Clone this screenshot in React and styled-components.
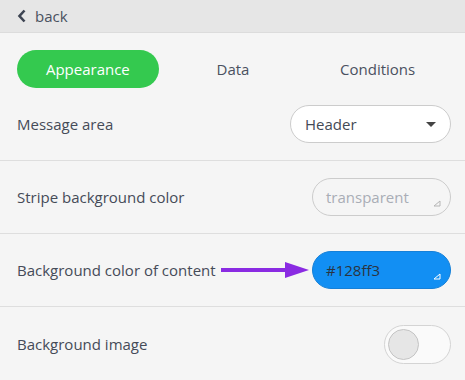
import { useState } from "react";
import styled, { createGlobalStyle } from "styled-components";

const GlobalStyle = createGlobalStyle`
  html, body {
    margin: 0;
    padding: 0;
    background: #f5f5f5;
  }
  body {
    font-family: "Open Sans", "Noto Sans", sans-serif;
    color: #444a55;
  }
`;

const Page = styled.div`
  width: 465px;
  height: 380px;
  background: #f5f5f5;
  overflow: hidden;
`;

const TopBar = styled.div`
  height: 32px;
  background: #e6e6e6;
  border-bottom: 1px solid #dcdcdc;
  display: flex;
  align-items: center;
  padding-left: 17px;
  gap: 9px;
  font-size: 15px;
  color: #4a5160;
`;

const Tabs = styled.div`
  display: flex;
  align-items: center;
  padding: 17px 17px 0 17px;
  height: 38px;
`;

const Tab = styled.button`
  height: 38px;
  border: none;
  border-radius: 19px;
  font-family: inherit;
  font-size: 15px;
  cursor: pointer;
  width: ${(p) => p.$w}px;
  background: ${(p) => (p.$active ? "#34c94f" : "transparent")};
  color: ${(p) => (p.$active ? "#fff" : "#4a5160")};
  padding: 0;
`;

const Row = styled.div`
  display: flex;
  align-items: center;
  justify-content: space-between;
  height: ${(p) => p.$h}px;
  padding: 0 14px 0 17px;
  border-bottom: ${(p) => (p.$last ? "none" : "1px solid #dedede")};
  position: relative;
`;

const Label = styled.span`
  font-size: 15px;
  color: #454b58;
`;

const Select = styled.div`
  width: 161px;
  height: 38px;
  box-sizing: border-box;
  border: 1px solid #cccccc;
  border-radius: 19px;
  background: #fff;
  display: flex;
  align-items: center;
  justify-content: space-between;
  padding: 0 14px 0 14px;
  font-size: 15px;
  color: #444a55;
`;

const Caret = styled.span`
  width: 0;
  height: 0;
  border-left: 5px solid transparent;
  border-right: 5px solid transparent;
  border-top: 5px solid #444;
`;

const ColorField = styled.div`
  width: 139px;
  height: 38px;
  box-sizing: border-box;
  border-radius: 19px;
  border: 1px solid ${(p) => (p.$filled ? "#1580d8" : "#cccccc")};
  background: ${(p) => (p.$filled ? "#128ff3" : "transparent")};
  color: ${(p) => (p.$filled ? "#2b3440" : "#a9adb6")};
  display: flex;
  align-items: center;
  padding-left: 13px;
  font-size: 15px;
  position: relative;
`;

const Grip = styled.svg`
  position: absolute;
  right: 9px;
  bottom: 8px;
`;

const Toggle = styled.div`
  width: 67px;
  height: 39px;
  box-sizing: border-box;
  border: 1px solid #d4d4d4;
  border-radius: 20px;
  background: #fafafa;
  display: flex;
  align-items: center;
  padding-left: 3px;
`;

const Knob = styled.div`
  width: 29px;
  height: 29px;
  border-radius: 50%;
  background: #e6e6e6;
  border: 1px solid #c4c4c4;
`;

const Arrow = styled.svg`
  position: absolute;
  left: 221px;
  top: 50%;
  transform: translateY(-50%);
`;

function ResizeGrip({ color }) {
  return (
    <Grip width="8" height="7" viewBox="0 0 8 7">
      <path d="M1 6 L7 6 L7 1 Z" fill="none" stroke={color} strokeWidth="1" strokeLinejoin="round" />
    </Grip>
  );
}

export default function App() {
  const [tab, setTab] = useState(0);
  const tabs = [
    { name: "Appearance", w: 143 },
    { name: "Data", w: 150 },
    { name: "Conditions", w: 142 },
  ];
  return (
    <Page>
      <GlobalStyle />
      <TopBar>
        <svg width="9" height="14" viewBox="0 0 9 14">
          <path d="M7.5 1.5 L2.5 7 L7.5 12.5" fill="none" stroke="#3d4452" strokeWidth="2.6" />
        </svg>
        back
      </TopBar>
      <Tabs>
        {tabs.map((t, i) => (
          <Tab key={t.name} $w={t.w} $active={tab === i} onClick={() => setTab(i)}>
            {t.name}
          </Tab>
        ))}
      </Tabs>
      <Row $h={72}>
        <Label>Message area</Label>
        <Select>
          Header
          <Caret />
        </Select>
      </Row>
      <Row $h={72}>
        <Label>Stripe background color</Label>
        <ColorField>
          transparent
          <ResizeGrip color="#b5b5b5" />
        </ColorField>
      </Row>
      <Row $h={72}>
        <Label>Background color of content</Label>
        <Arrow width="88" height="18" viewBox="0 0 88 18">
          <rect x="0" y="7" width="66" height="4" fill="#8a2be2" />
          <path d="M64 1 L88 9 L64 17 Z" fill="#8a2be2" />
        </Arrow>
        <ColorField $filled>
          #128ff3
          <ResizeGrip color="#ffffff" />
        </ColorField>
      </Row>
      <Row $h={74} $last>
        <Label>Background image</Label>
        <Toggle>
          <Knob />
        </Toggle>
      </Row>
    </Page>
  );
}
